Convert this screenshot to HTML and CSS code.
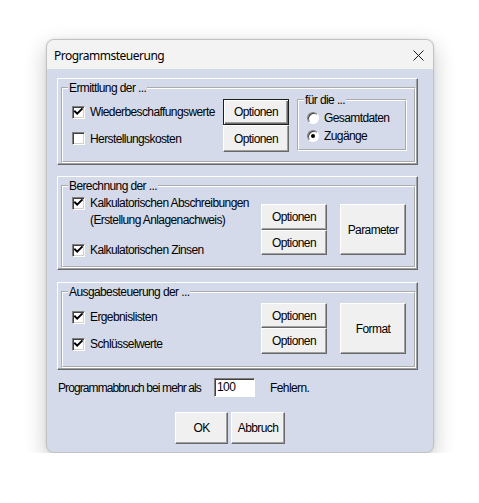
FILE: index.html
```html
<!DOCTYPE html>
<html lang="de">
<head>
<meta charset="utf-8">
<title>Programmsteuerung</title>
<link rel="stylesheet" href="styles.css">
</head>
<body>
<div class="window">
  <div class="titlebar">
    <span class="title">Programmsteuerung</span>
    <svg class="close" width="11" height="11" viewBox="0 0 11 11"><path d="M0.5 0.5 L10.5 10.5 M10.5 0.5 L0.5 10.5" stroke="#1a1a1a" stroke-width="1" fill="none"/></svg>
  </div>
  <div class="client">
    <div class="panel p1">
      <fieldset class="group">
        <legend>Ermittlung der ...</legend>
        <div class="g1-body">
          <div class="rows">
            <div class="row r1">
              <div class="chk c1"><span class="box"><svg viewBox="0 0 13 13" width="13" height="13"><path d="M3 5.5 L5.2 7.7 L9.8 3.1" stroke="#000" stroke-width="2" fill="none" stroke-linecap="square"/></svg></span>Wiederbeschaffungswerte</div>
              <button class="btn default b66">Optionen</button>
            </div>
            <div class="row r2">
              <div class="chk c1"><span class="box"></span>Herstellungskosten</div>
              <button class="btn b66">Optionen</button>
            </div>
          </div>
          <fieldset class="group radios">
            <legend>für die ...</legend>
            <div class="radio first"><span class="circle"></span>Gesamtdaten</div>
            <div class="radio"><span class="circle on"></span>Zugänge</div>
          </fieldset>
        </div>
      </fieldset>
    </div>

    <div class="panel p2">
      <fieldset class="group">
        <legend>Berechnung der ...</legend>
        <div class="g-body">
          <div class="checks c2">
            <div class="chk multi i1"><span class="box"><svg viewBox="0 0 13 13" width="13" height="13"><path d="M3 5.5 L5.2 7.7 L9.8 3.1" stroke="#000" stroke-width="2" fill="none" stroke-linecap="square"/></svg></span><span>Kalkulatorischen Abschreibungen<br>(Erstellung Anlagenachweis)</span></div>
            <div class="chk multi i2"><span class="box"><svg viewBox="0 0 13 13" width="13" height="13"><path d="M3 5.5 L5.2 7.7 L9.8 3.1" stroke="#000" stroke-width="2" fill="none" stroke-linecap="square"/></svg></span><span>Kalkulatorischen Zinsen</span></div>
          </div>
          <div class="btncol bc2">
            <button class="btn b66 h26">Optionen</button>
            <button class="btn b66 h25">Optionen</button>
          </div>
          <button class="btn big bg2">Parameter</button>
        </div>
      </fieldset>
    </div>

    <div class="panel p3">
      <fieldset class="group">
        <legend>Ausgabesteuerung der ...</legend>
        <div class="g-body">
          <div class="checks c3">
            <div class="chk multi j1"><span class="box"><svg viewBox="0 0 13 13" width="13" height="13"><path d="M3 5.5 L5.2 7.7 L9.8 3.1" stroke="#000" stroke-width="2" fill="none" stroke-linecap="square"/></svg></span><span>Ergebnislisten</span></div>
            <div class="chk multi j2"><span class="box"><svg viewBox="0 0 13 13" width="13" height="13"><path d="M3 5.5 L5.2 7.7 L9.8 3.1" stroke="#000" stroke-width="2" fill="none" stroke-linecap="square"/></svg></span><span>Schlüsselwerte</span></div>
          </div>
          <div class="btncol bc3">
            <button class="btn b66 h25">Optionen</button>
            <button class="btn b66 h26">Optionen</button>
          </div>
          <button class="btn big bg3">Format</button>
        </div>
      </fieldset>
    </div>

    <div class="abort">
      <span class="abort-label">Programmabbruch bei mehr als</span>
      <span class="field">100</span>
      <span class="abort-tail">Fehlern.</span>
    </div>

    <div class="actions">
      <button class="btn ok">OK</button>
      <button class="btn cancel">Abbruch</button>
    </div>
  </div>
</div>
</body>
</html>
```

FILE: styles.css
```css
* { box-sizing: border-box; }
html, body { margin: 0; padding: 0; background: #ffffff; }
body {
  padding: 39px 0 0 46px;
  font-family: "Liberation Sans", Arial, sans-serif;
  font-size: 12px;
  letter-spacing: -0.6px;
  color: #000;
}
.window {
  width: 388px;
  height: 414px;
  border: 1px solid #c2c2c2;
  border-radius: 8px;
  overflow: hidden;
  background: #d5daea;
  display: flex;
  flex-direction: column;
  box-shadow: 0 8px 22px rgba(0,0,0,0.22), 0 0 3px rgba(0,0,0,0.10);
}
.titlebar {
  height: 29px;
  flex: none;
  background: #f3f3f3;
  display: flex;
  align-items: center;
  justify-content: space-between;
  padding: 1px 9px 0 7px;
  font-family: "Noto Sans", "Open Sans", sans-serif;
  font-size: 12px;
  letter-spacing: -0.5px;
}
.close { display: block; }
.client {
  flex: 1;
  padding: 9px 0 0 10px;
}
.panel {
  width: 361px;
  border: 1px solid;
  border-color: #ffffff #696969 #696969 #ffffff;
  box-shadow: inset -1px -1px 0 #a0a0a0;
  padding: 2px 1px 1px 3px;
  display: flex;
  flex-direction: column;
}
.p1 { height: 87px; }
.p2 { height: 94px; margin-top: 11px; }
.p3 { height: 88px; margin-top: 12px; }
.group {
  margin: 0;
  padding: 0;
  border: 2px groove #ffffff;
  flex: 1;
  min-width: 0;
}
.group > legend {
  padding: 0 1px;
  margin-left: 5px;
  line-height: 14px;
}
.g1-body { display: flex; margin-top: 4px; }
.rows { margin-left: 9px; }
.row { display: flex; align-items: center; }
.r1 { height: 26px; }
.r2 { height: 27px; }
.chk { display: flex; align-items: center; white-space: nowrap; }
.c1 { width: 151px; }
.box {
  width: 13px;
  height: 13px;
  flex: none;
  margin-right: 5px;
  background: #fff;
  border: 1px solid;
  border-color: #808080 #ffffff #ffffff #808080;
  box-shadow: inset 1px 1px 0 #404040, inset -1px -1px 0 #d4d0c8;
  position: relative;
}
.box svg { position: absolute; left: -1px; top: -1px; }
.btn {
  margin: 0;
  padding: 0;
  font: inherit;
  letter-spacing: inherit;
  color: #000;
  background: #f0f0f0;
  border: 1px solid;
  border-color: #ffffff #696969 #696969 #ffffff;
  box-shadow: inset -1px -1px 0 #a0a0a0;
  display: flex;
  align-items: center;
  justify-content: center;
}
.btn.default {
  border-color: #1e1e1e;
  box-shadow: inset 1px 1px 0 #ffffff, inset -1px -1px 0 #696969, inset -2px -2px 0 #a0a0a0;
}
.b66 { width: 66px; height: 100%; }
.h26 { height: 26px; }
.h25 { height: 25px; }
.radios {
  flex: none;
  width: 110px;
  height: 58px;
  margin-left: 8px;
  margin-top: -6px;
}
.radio {
  display: flex;
  align-items: center;
  height: 18px;
  padding-left: 8px;
}
.radio.first { margin-top: 2px; }
.circle {
  width: 12px;
  height: 12px;
  flex: none;
  margin-right: 5px;
  border-radius: 50%;
  background: #fff;
  border: 1px solid;
  border-color: #808080 #ffffff #ffffff #808080;
  box-shadow: inset 1px 1px 0 #404040;
  position: relative;
}
.circle.on::after {
  content: "";
  position: absolute;
  left: 3px;
  top: 3px;
  width: 4px;
  height: 4px;
  border-radius: 50%;
  background: #000;
}
.g-body { display: flex; }
.checks { width: 198px; padding-left: 9px; flex: none; }
.multi { align-items: flex-start; line-height: 17px; }
.multi .box { margin-top: 2px; }
.i1 { margin-top: 2px; }
.i2 { margin-top: 13px; }
.j1 { margin-top: 10px; }
.j2 { margin-top: 10px; }
.btncol { display: flex; flex-direction: column; flex: none; }
.bc2 { margin-top: 11px; }
.bc3 { margin-top: 4px; }
.big { width: 66px; height: 51px; margin-left: 13px; flex: none; }
.bg2 { margin-top: 11px; }
.bg3 { margin-top: 4px; }
.abort {
  display: flex;
  align-items: center;
  margin-top: 8px;
  padding-left: 1px;
  height: 19px;
}
.abort-label { width: 156px; flex: none; white-space: nowrap; letter-spacing: -0.9px; }
.field {
  width: 41px;
  height: 19px;
  flex: none;
  background: #fff;
  border: 1px solid;
  border-color: #808080 #ffffff #ffffff #808080;
  box-shadow: inset 1px 1px 0 #404040;
  padding-left: 2px;
  line-height: 17px;
}
.abort-tail { margin-left: 15px; }
.actions {
  display: flex;
  gap: 3px;
  margin-top: 15px;
  padding-left: 118px;
}
.ok { width: 53px; height: 32px; }
.cancel { width: 54px; height: 32px; }
```
